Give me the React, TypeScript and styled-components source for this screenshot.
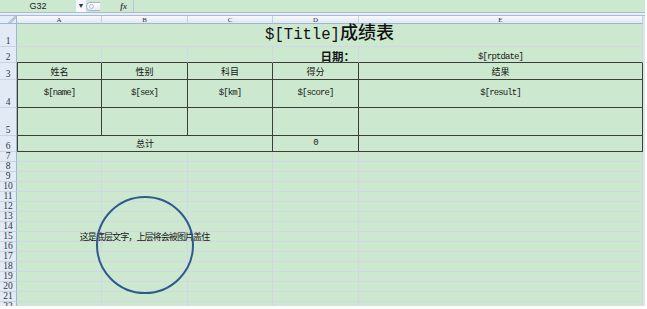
import { Fragment } from "react";
import styled, { createGlobalStyle } from "styled-components";

const GREEN = "#cce8cf";
const GRID = "#d1d8e3";
const DARK = "#3a3f3a";
const HEAD_LINE = "#a9bcd4";

const GlobalStyle = createGlobalStyle`
  body {
    margin: 0;
    background: #fff;
  }
`;

const Window = styled.div`
  width: 645px;
  height: 306px;
  overflow: hidden;
  background: ${GREEN};
  font-family: "Liberation Sans", "Noto Sans CJK SC", sans-serif;
  color: #1a1a1a;
`;

const FormulaBar = styled.div`
  display: flex;
  align-items: center;
  height: 13px;
  box-sizing: border-box;
  border-bottom: 1px solid ${HEAD_LINE};
  font-size: 9px;
`;

const NameBox = styled.div`
  width: 76px;
  text-align: center;
  color: #222;
`;

const DropButton = styled.div`
  width: 10px;
  height: 12px;
  background: #f4f7fb;
  font-size: 7px;
  line-height: 12px;
  text-align: center;
  color: #333;
`;

const ExpandPill = styled.div`
  width: 14px;
  height: 9px;
  box-sizing: border-box;
  border: 1px solid #9fb4cf;
  border-right: none;
  border-radius: 6px 0 0 6px;
  background: linear-gradient(#ffffff, #e6edf6);
  display: flex;
  align-items: center;
  padding-left: 2px;
  &::before {
    content: "";
    width: 3px;
    height: 3px;
    border-radius: 50%;
    border: 1px solid #b4c0cf;
  }
`;

const FxLabel = styled.div`
  width: 27px;
  text-align: right;
  padding-right: 6px;
  font-family: "Liberation Serif", serif;
  font-style: italic;
  font-weight: bold;
  font-size: 8px;
  color: #444;
`;

const FormulaInput = styled.div`
  flex: 1;
  align-self: stretch;
  border-left: 1px solid #b9c8db;
`;

const Spacer = styled.div`
  height: 3px;
  background: #e8eef6;
  border-bottom: 1px solid ${HEAD_LINE};
  box-sizing: border-box;
`;

const Sheet = styled.div`
  position: relative;
  display: grid;
  grid-template-columns: 17px 85px 86px 85px 86px 284px;
  grid-template-rows: 8px 23px 16px 17px 28px 28px 16px repeat(16, 10px);
  width: 643px;
  border-right: 2px solid #dde4ec;
`;

const Corner = styled.div`
  background: linear-gradient(135deg, #e4ecf7 62%, #b9c6d8 62%, #b9c6d8 80%, #e4ecf7 80%);
  border-right: 1px solid #9eb6ce;
  border-bottom: 1px solid #9eb6ce;
  box-sizing: border-box;
`;

const ColHeader = styled.div`
  display: flex;
  align-items: center;
  justify-content: center;
  background: linear-gradient(#f7f9fc, #e1e8f3);
  border-right: 1px solid #c3d0e2;
  border-bottom: 1px solid #9eb6ce;
  box-sizing: border-box;
  font-family: "Liberation Serif", serif;
  font-size: 7px;
  color: #333;
`;

const RowHeader = styled.div`
  display: flex;
  align-items: flex-end;
  justify-content: center;
  background: #e2eaf6;
  border-right: 1px solid #9eb6ce;
  border-bottom: 1px solid #c8d4e5;
  box-sizing: border-box;
  font-family: "Liberation Serif", serif;
  font-size: 9.5px;
  line-height: 9px;
  color: #2e3a48;
`;

interface CellProps {
  $span?: number;
  $justify?: "flex-start" | "center" | "flex-end";
  $valign?: "center" | "flex-end";
  $dl?: boolean;
  $dr?: boolean;
  $db?: boolean;
  $pad?: number;
}

const Cell = styled.div<CellProps>`
  grid-column: span ${({ $span }) => $span ?? 1};
  display: flex;
  justify-content: ${({ $justify }) => $justify ?? "center"};
  align-items: ${({ $valign }) => $valign ?? "center"};
  padding: 0 ${({ $pad }) => $pad ?? 0}px;
  border-right: 1px solid ${({ $dr }) => ($dr ? DARK : GRID)};
  border-bottom: 1px solid ${({ $db }) => ($db ? DARK : GRID)};
  border-left: ${({ $dl }) => ($dl ? `1px solid ${DARK}` : "none")};
  box-sizing: border-box;
  white-space: nowrap;
  min-width: 0;
`;

const Title = styled.span`
  font-size: 18px;
  line-height: 20px;
  font-family: "Noto Sans CJK SC", sans-serif;
  font-weight: 500;
  color: #111;
  margin-bottom: 1px;
`;

const TitleCode = styled.span`
  font-family: "Liberation Mono", monospace;
  font-size: 15.6px;
`;

const LabelText = styled.span<{ $bold?: boolean; $size?: number }>`
  font-family: "Noto Sans CJK SC", sans-serif;
  font-size: ${({ $size }) => $size ?? 9}px;
  font-weight: ${({ $bold }) => ($bold ? 700 : 400)};
  line-height: 1;
  color: #151515;
`;

const CodeText = styled.span`
  font-family: "Liberation Mono", "Noto Sans CJK SC", monospace;
  font-size: 9px;
  letter-spacing: -0.9px;
  line-height: 1;
  color: #1a1a1a;
`;

const NoteText = styled.span`
  position: relative;
  z-index: 1;
  font-family: "Noto Sans CJK SC", sans-serif;
  font-size: 9px;
  letter-spacing: -0.9px;
  line-height: 1;
  color: #151515;
`;

const Shape = styled.svg`
  position: absolute;
  left: 95px;
  top: 179px;
  z-index: 2;
`;

const COLS = ["A", "B", "C", "D", "E"];
const HEADINGS = ["姓名", "性别", "科目", "得分", "结果"];
const FIELDS = ["$[name]", "$[sex]", "$[km]", "$[score]", "$[result]"];
const PLAIN_ROWS = Array.from({ length: 16 }, (_, i) => i + 7);

export default function App() {
  return (
    <>
      <GlobalStyle />
      <Window>
        <FormulaBar>
          <NameBox>G32</NameBox>
          <DropButton>▼</DropButton>
          <ExpandPill />
          <FxLabel>fx</FxLabel>
          <FormulaInput />
        </FormulaBar>
        <Spacer />
        <Sheet>
          <Corner />
          {COLS.map((c) => (
            <ColHeader key={c}>{c}</ColHeader>
          ))}

          <RowHeader>1</RowHeader>
          <Cell $span={5} $valign="flex-end">
            <Title>
              <TitleCode>$[Title]</TitleCode>成绩表
            </Title>
          </Cell>

          <RowHeader>2</RowHeader>
          <Cell $db />
          <Cell $db />
          <Cell $db />
          <Cell $db $justify="flex-end" $valign="flex-end" $pad={3}>
            <LabelText $bold $size={11.5}>日期：</LabelText>
          </Cell>
          <Cell $db $valign="flex-end">
            <CodeText>$[rptdate]</CodeText>
          </Cell>

          <RowHeader>3</RowHeader>
          {HEADINGS.map((h, i) => (
            <Cell key={h} $dl={i === 0} $dr $db>
              <LabelText>{h}</LabelText>
            </Cell>
          ))}

          <RowHeader>4</RowHeader>
          {FIELDS.map((f, i) => (
            <Cell key={f} $dl={i === 0} $dr $db>
              <CodeText>{f}</CodeText>
            </Cell>
          ))}

          <RowHeader>5</RowHeader>
          {COLS.map((c, i) => (
            <Cell key={c} $dl={i === 0} $dr $db />
          ))}

          <RowHeader>6</RowHeader>
          <Cell $span={3} $dl $dr $db>
            <LabelText>总计</LabelText>
          </Cell>
          <Cell $dr $db>
            <CodeText>0</CodeText>
          </Cell>
          <Cell $dr $db />

          {PLAIN_ROWS.map((r) => (
            <Fragment key={r}>
              <RowHeader>{r}</RowHeader>
              {COLS.map((c) => (
                <Cell key={c}>
                  {r === 15 && c === "B" && <NoteText>这是底层文字，上层将会被图片盖住</NoteText>}
                </Cell>
              ))}
            </Fragment>
          ))}

          <Shape width="100" height="100" viewBox="0 0 100 100">
            <circle cx="50" cy="50" r="48" fill="none" stroke="#2f5a8e" strokeWidth="2" />
          </Shape>
        </Sheet>
      </Window>
    </>
  );
}
